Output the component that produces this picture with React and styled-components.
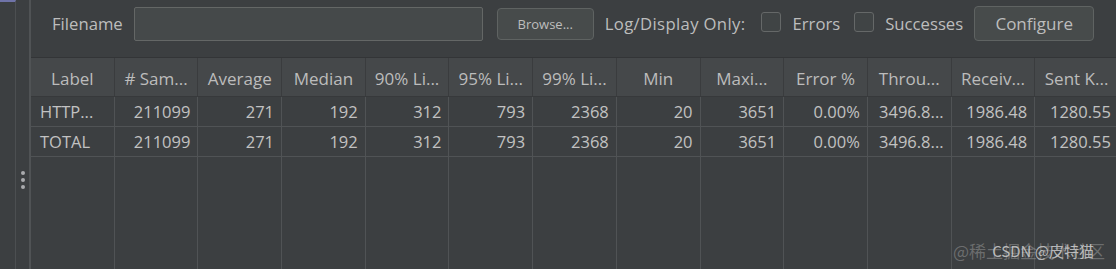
import React from 'react';
import styled, { createGlobalStyle } from 'styled-components';

const GlobalStyle = createGlobalStyle`
  html, body {
    margin: 0;
    padding: 0;
    background: #3c3f41;
  }
  body {
    font-family: "Open Sans", "Noto Sans", sans-serif;
    color: #bbbbbb;
  }
`;

const Frame = styled.div`
  position: relative;
  display: flex;
  height: 269px;
  overflow: hidden;
  background: #3c3f41;
`;

const Gutter = styled.div`
  width: 16px;
  border-right: 1px solid #4c4f51;
  border-top: 2px solid #6f73a8;
  box-sizing: border-box;
  flex-shrink: 0;
`;

const Splitter = styled.div`
  width: 15px;
  flex-shrink: 0;
  box-sizing: border-box;
  border-right: 2px solid #505355;
  display: flex;
  flex-direction: column;
  align-items: center;
  gap: 3px;
  padding-top: 171px;
`;

const Dot = styled.span`
  width: 4px;
  height: 4px;
  border-radius: 50%;
  background: #a9abad;
`;

const Panel = styled.div`
  flex: 1;
  display: flex;
  flex-direction: column;
  min-width: 0;
  overflow: hidden;
`;

const Toolbar = styled.div`
  display: flex;
  align-items: center;
  height: 47px;
  padding-left: 21px;
  margin-bottom: 10px;
  font-size: 16.7px;
  color: #bdbdbd;
`;

const FieldLabel = styled.span`
  margin-right: 11px;
`;

const Spaced = styled.span`
  letter-spacing: ${({ $spacing }) => $spacing || 0}px;
`;

const TextField = styled.div`
  width: 349px;
  height: 34px;
  box-sizing: border-box;
  border: 1px solid #646766;
  border-radius: 2px;
  background: #45494a;
  margin-right: 14px;
`;

const Button = styled.button`
  height: ${({ $big }) => ($big ? '35px' : '32px')};
  width: ${({ $big }) => ($big ? '120px' : '97px')};
  box-sizing: border-box;
  border: 1px solid #5f6362;
  border-radius: 4px;
  background: #474b4b;
  color: #bdbdbd;
  font-family: "Open Sans", "Noto Sans", sans-serif;
  font-size: ${({ $big }) => ($big ? '17px' : '13px')};
  padding: 0;
  margin-left: ${({ $left }) => $left || 0}px;
  margin-right: ${({ $right }) => $right || 0}px;
`;

const Check = styled.span`
  width: 20px;
  height: 20px;
  box-sizing: border-box;
  border: 1px solid #656868;
  border-radius: 3px;
  background: #404445;
  margin-left: ${({ $left }) => $left}px;
  margin-right: 11px;
  margin-top: -3px;
`;

const Grid = styled.div`
  flex: 1;
  display: grid;
  grid-template-columns: repeat(13, 83.7px);
  grid-template-rows: 39px 30px 30px 1fr;
  border-top: 1px solid #333537;
`;

const HeadCell = styled.div`
  background: #45484a;
  border-right: 1px solid #3a3c3e;
  border-bottom: 1px solid #37393b;
  display: flex;
  align-items: center;
  justify-content: center;
  padding-top: 2px;
  font-size: 17px;
  color: #bcbcbc;
  white-space: nowrap;
  overflow: hidden;
`;

const Cell = styled.div`
  border-right: 1px solid #505355;
  border-bottom: ${({ $filler }) => ($filler ? 'none' : '1px solid #505355')};
  display: flex;
  align-items: center;
  justify-content: ${({ $left }) => ($left ? 'flex-start' : 'flex-end')};
  padding: 0 7px 0 9px;
  font-size: 16.5px;
  color: #c2c2c2;
  white-space: nowrap;
  overflow: hidden;
`;

const Watermark = styled.span`
  position: absolute;
  right: ${({ $right }) => $right}px;
  bottom: ${({ $bottom }) => $bottom}px;
  font-family: "Noto Sans CJK SC", "Noto Sans", sans-serif;
  font-size: ${({ $size }) => $size}px;
  color: ${({ $color }) => $color};
  white-space: nowrap;
  pointer-events: none;
`;

const headers = [
  'Label', '# Sam...', 'Average', 'Median', '90% Li...', '95% Li...', '99% Li...',
  'Min', 'Maxi...', 'Error %', 'Throu...', 'Receiv...', 'Sent K...',
];

const rows = [
  ['HTTP...', '211099', '271', '192', '312', '793', '2368', '20', '3651', '0.00%', '3496.8...', '1986.48', '1280.55'],
  ['TOTAL', '211099', '271', '192', '312', '793', '2368', '20', '3651', '0.00%', '3496.8...', '1986.48', '1280.55'],
];

export default function App() {
  return (
    <>
      <GlobalStyle />
      <Frame>
        <Gutter />
        <Splitter>
          <Dot />
          <Dot />
          <Dot />
        </Splitter>
        <Panel>
          <Toolbar>
            <FieldLabel>Filename</FieldLabel>
            <TextField />
            <Button $right={11}>Browse...</Button>
            <Spaced $spacing={0.35}>Log/Display Only:</Spaced>
            <Check $left={16} />
            <Spaced>Errors</Spaced>
            <Check $left={14} />
            <Spaced>Successes</Spaced>
            <Button $big $left={11}>Configure</Button>
          </Toolbar>
          <Grid>
            {headers.map((h) => (
              <HeadCell key={h}>{h}</HeadCell>
            ))}
            {rows.map((r, i) =>
              r.map((v, j) => (
                <Cell key={`${i}-${j}`} $left={j === 0}>{v}</Cell>
              ))
            )}
            {headers.map((h) => (
              <Cell key={`f-${h}`} $filler />
            ))}
          </Grid>
        </Panel>
        <Watermark $right={11} $bottom={6} $size={17} $color="rgba(150,150,150,0.55)">@稀土掘金技术社区</Watermark>
        <Watermark $right={22} $bottom={8} $size={15} $color="rgba(215,215,215,0.8)">CSDN @皮特猫</Watermark>
      </Frame>
    </>
  );
}
